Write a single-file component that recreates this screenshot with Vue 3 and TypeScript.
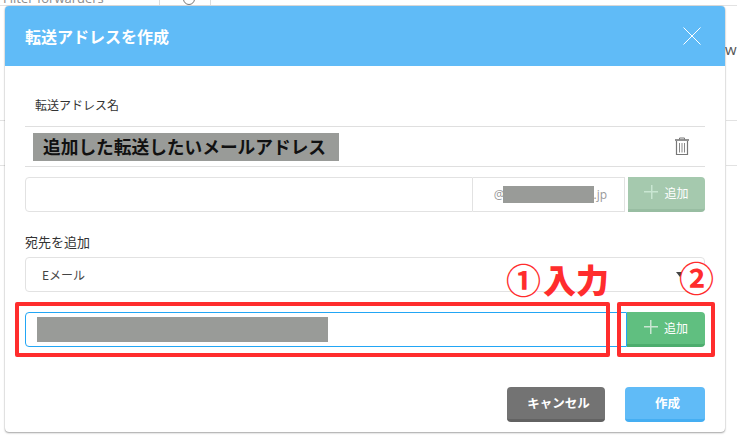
<script setup lang="ts">
const title = '転送アドレスを作成'
const nameLabel = '転送アドレス名'
const forwardName = '追加した転送したいメールアドレス'
const destLabel = '宛先を追加'
</script>

<template>
  <div class="page">
    <div class="backdrop">
      <span class="bg-filter">Filter forwarders</span>
      <span class="bg-circle"></span>
      <span class="bg-vline one"></span>
      <span class="bg-vline two"></span>
      <span class="bg-hline top"></span>
      <span class="bg-hline left a"></span>
      <span class="bg-hline left b"></span>
      <span class="bg-hline right a"></span>
      <span class="bg-hline right b"></span>
      <span class="bg-w">w</span>
    </div>

    <div class="modal">
      <header class="modal-head">
        <h2>{{ title }}</h2>
        <svg class="close" width="18" height="18" viewBox="0 0 18 18">
          <path d="M0.5 0.5L17.5 17.5M17.5 0.5L0.5 17.5" stroke="#fff" stroke-width="1" fill="none" />
        </svg>
      </header>

      <div class="modal-body">
        <div class="name-label">{{ nameLabel }}</div>
        <div class="name-row">
          <span class="name-mask">{{ forwardName }}</span>
          <svg class="trash" width="16" height="19" viewBox="0 0 16 19">
            <path d="M5.500 2.500V1h5v1.500" fill="none" stroke="#777" />
            <path d="M1 3h14" stroke="#777" stroke-width="1.6" />
            <path d="M2.500 4v13.500h11V4" fill="none" stroke="#777" stroke-width="1.2" />
            <path d="M5.500 6v9.500M8 6v9.500M10.500 6v9.500" stroke="#888" />
          </svg>
        </div>

        <div class="input-row first">
          <div class="field grow left-round"></div>
          <div class="domain"><span class="at">@</span><span class="domain-mask"></span>.jp</div>
          <button class="add disabled" type="button">
            <span class="plus"></span>追加
          </button>
        </div>

        <div class="dest-label">{{ destLabel }}</div>
        <div class="select">
          <span>Eメール</span>
          <i class="caret"></i>
        </div>

        <div class="input-row second">
          <div class="field grow focused"><span class="email-mask"></span></div>
          <button class="add" type="button">
            <span class="plus"></span>追加
          </button>
        </div>

        <footer class="modal-foot">
          <button class="btn cancel" type="button">キャンセル</button>
          <button class="btn create" type="button">作成</button>
        </footer>
      </div>
    </div>

    <div class="mark box-one"></div>
    <div class="mark box-two"></div>
    <div class="note note-one"><span class="circled">①</span>入力</div>
    <div class="note note-two"><span class="circled">②</span></div>
  </div>
</template>

<style>
html,
body {
  margin: 0;
  background: #fff;
}
</style>

<style scoped>
.page {
  position: relative;
  width: 737px;
  height: 439px;
  overflow: hidden;
  padding: 6px 0 0 5px;
  box-sizing: border-box;
  background: #fff;
  font-family: "Noto Sans CJK JP", "Open Sans", sans-serif;
}
.backdrop span {
  position: absolute;
}
.bg-filter {
  left: 3px;
  top: -11px;
  font: 13px/18px "Open Sans", sans-serif;
  color: #8c8c8c;
}
.bg-circle {
  left: 183px;
  top: -7px;
  width: 10px;
  height: 10px;
  border: 1px solid #777;
  border-radius: 50%;
}
.bg-vline {
  top: 0;
  width: 1px;
  height: 6px;
  background: #ddd;
}
.bg-vline.one {
  left: 159px;
}
.bg-vline.two {
  left: 210px;
}
.bg-hline {
  height: 1px;
  background: #e2e2e2;
}
.bg-hline.top {
  left: 0;
  top: 5px;
  width: 737px;
}
.bg-hline.left {
  left: 0;
  width: 5px;
}
.bg-hline.right {
  left: 726px;
  width: 11px;
}
.bg-hline.a {
  top: 120px;
}
.bg-hline.b {
  top: 165px;
}
.bg-w {
  left: 725px;
  top: 38px;
  font: 15px/22px "Open Sans", sans-serif;
  color: #555;
}

.modal {
  position: relative;
  width: 720px;
  height: 426px;
  background: #fff;
  border-radius: 4px;
  box-shadow: 0 1px 2px rgba(0, 0, 0, 0.35), 0 0 1px rgba(0, 0, 0, 0.3);
}
.modal-head {
  display: flex;
  align-items: center;
  justify-content: space-between;
  height: 60px;
  padding: 0 24px 0 20px;
  box-sizing: border-box;
  background: #60bbf7;
  border-radius: 4px 4px 0 0;
}
.modal-head h2 {
  margin: 0;
  font-size: 16px;
  font-weight: 700;
  color: #fff;
}
.modal-body {
  padding: 0 20px;
}
.name-label {
  height: 61px;
  padding: 30px 0 0 10px;
  box-sizing: border-box;
  font-size: 12px;
  line-height: 18px;
  color: #333;
  border-bottom: 1px solid #dfdfdf;
}
.name-row {
  display: flex;
  align-items: center;
  justify-content: space-between;
  height: 40px;
  padding: 0 15px 0 8px;
  box-sizing: border-box;
  border-bottom: 1px solid #dfdfdf;
}
.name-mask {
  display: block;
  width: 306px;
  height: 28px;
  padding-left: 10px;
  box-sizing: border-box;
  background: #999b98;
  color: #111;
  font-size: 17.7px;
  font-weight: 700;
  line-height: 27px;
  white-space: nowrap;
}
.input-row {
  display: flex;
  height: 35px;
}
.input-row.first {
  margin-top: 10px;
}
.input-row.second {
  margin-top: 20px;
}
.field {
  box-sizing: border-box;
  border: 1px solid #e2e2e2;
}
.grow {
  flex: 1;
}
.left-round {
  border-radius: 4px 0 0 4px;
}
.focused {
  display: flex;
  align-items: center;
  padding-left: 11px;
  border: 1px solid #22a6f5;
  border-radius: 4px 0 0 4px;
}
.email-mask {
  display: block;
  width: 291px;
  height: 25px;
  background: #999b98;
}
.domain {
  display: flex;
  align-items: center;
  justify-content: center;
  width: 152px;
  margin-right: 3px;
  padding-left: 4px;
  box-sizing: border-box;
  border: 1px solid #e2e2e2;
  border-left: 0;
  font: 12px "Open Sans", sans-serif;
  color: #999;
}
.at {
  margin-right: -2px;
}
.domain-mask {
  display: block;
  width: 91px;
  height: 17px;
  background: #999b98;
}
.add {
  display: flex;
  align-items: center;
  justify-content: center;
  width: 78px;
  padding: 0 0 2px;
  border: 0;
  border-bottom: 3px solid #4dad6e;
  border-radius: 0 4px 4px 0;
  background: #60bf80;
  font-family: inherit;
  font-size: 12px;
  color: #fff;
}
.add.disabled {
  width: 77px;
  background: #a5c9ae;
  border-bottom-color: #98bda2;
}
.plus {
  position: relative;
  width: 14px;
  height: 14px;
  margin-right: 6px;
  background:
    linear-gradient(#c9e6d2, #c9e6d2) center / 14px 1.5px no-repeat,
    linear-gradient(#c9e6d2, #c9e6d2) center / 1.5px 14px no-repeat;
}
.dest-label {
  margin-top: 21px;
  font-size: 13px;
  line-height: 18px;
  color: #333;
}
.select {
  display: flex;
  align-items: center;
  justify-content: space-between;
  height: 35px;
  margin-top: 6px;
  padding: 0 20px 0 16px;
  box-sizing: border-box;
  border: 1px solid #e2e2e2;
  border-radius: 4px;
  font-size: 12px;
  color: #444;
}
.caret {
  width: 0;
  height: 0;
  border: 4px solid transparent;
  border-top: 5px solid #444;
  border-bottom: 0;
}
.modal-foot {
  display: flex;
  justify-content: flex-end;
  gap: 20px;
  margin-top: 40px;
}
.btn {
  height: 35px;
  border: 0;
  border-radius: 4px;
  padding: 0 0 2px 5px;
  font-family: inherit;
  font-size: 12.5px;
  font-weight: 700;
  color: #fff;
}
.cancel {
  width: 98px;
  background: #737373;
  border-bottom: 3px solid #626262;
}
.create {
  width: 80px;
  background: #60bbf7;
  border-bottom: 3px solid #45aef2;
}

/* annotations drawn over the screenshot */
.mark {
  position: absolute;
  box-sizing: border-box;
  border: 4px solid #ff2d2d;
  border-radius: 2px;
}
.box-one {
  left: 15px;
  top: 302px;
  width: 595px;
  height: 55px;
}
.box-two {
  left: 617px;
  top: 302px;
  width: 98px;
  height: 55px;
}
.note {
  position: absolute;
  display: flex;
  align-items: center;
  color: #ff2d2d;
  font-size: 33px;
  font-weight: 900;
  line-height: 40px;
  white-space: nowrap;
}
.note-one {
  left: 506px;
  top: 259px;
}
.note-two {
  left: 679px;
  top: 259px;
}
.circled {
  display: block;
  width: 37px;
  height: 36px;
  line-height: 36px;
  font-size: 35px;
  font-weight: 700;
  background: radial-gradient(circle at 18px 20px, #fff 16px, transparent 17px);
}
</style>
